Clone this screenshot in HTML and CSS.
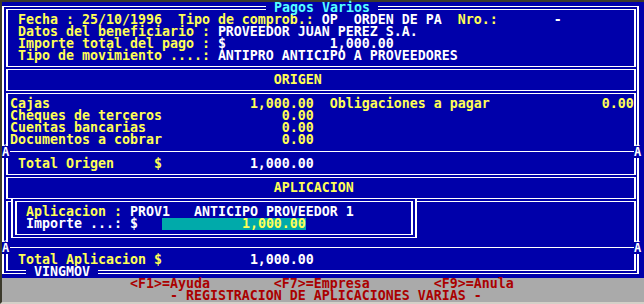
FILE: index.html
```html
<!DOCTYPE html>
<html>
<head>
    <meta charset="utf-8">
    <title>Pagos Varios</title>
    <link rel="stylesheet" href="styles.css">
</head>
<body>
    <div class="screen">
        <div class="frame frame-top">
            <div class="frame-title"> Pagos Varios </div>

            <div class="section">
                <div class="ln indent">Fecha : 25/10/1996  Tipo de comprob.: <span class="w">OP  ORDEN DE PA  </span>Nro.:<span class="w">       -</span></div>
                <div class="ln indent"><span class="lbl">Datos del beneficiario :</span><span class="w">PROVEEDOR JUAN PEREZ S.A.</span></div>
                <div class="ln indent"><span class="lbl">Importe total del pago :</span><span class="w">$</span><span class="pay w">1,000.00</span></div>
                <div class="ln indent"><span class="lbl">Tipo de movimiento ....:</span><span class="w">ANTIPRO ANTICIPO A PROVEEDORES</span></div>
            </div>

            <div class="section">
                <div class="ln heading">ORIGEN</div>
            </div>

            <div class="section open-bottom">
                <div class="ln"><span class="col30">Cajas</span><span class="num">1,000.00</span><span class="col34">Obligaciones a pagar</span>0.00</div>
                <div class="ln"><span class="col30">Cheques de terceros</span><span class="num">0.00</span></div>
                <div class="ln"><span class="col30">Cuentas bancarias</span><span class="num">0.00</span></div>
                <div class="ln"><span class="col30">Documentos a cobrar</span><span class="num">0.00</span></div>
            </div>
        </div>

        <div class="divider"><span class="joint">Â</span><span class="rule"></span><span class="joint">Â</span></div>

        <div class="frame">
            <div class="section open-top">
                <div class="ln"><span class="col30"> Total Origen     $</span><span class="num w">1,000.00</span></div>
            </div>

            <div class="section">
                <div class="ln heading">APLICACION</div>
            </div>

            <div class="section pick">
                <div class="pick-box">
                    <div class="pick-inner">
                        <div class="ln"> Aplicacion : <span class="w">PROV1   ANTICIPO PROVEEDOR 1</span></div>
                        <div class="ln w"> Importe ...: $   <span class="field">1,000.00</span></div>
                    </div>
                </div>
            </div>
        </div>

        <div class="divider"><span class="joint">Â</span><span class="rule"></span><span class="joint">Â</span></div>

        <div class="frame frame-bottom">
            <div class="frame-title bottom-title"> VINGMOV </div>
            <div class="section open-top">
                <div class="ln"><span class="col30"> Total Aplicacion $</span><span class="num w">1,000.00</span></div>
            </div>
        </div>

        <div class="status">
            <div class="ln keys"><span class="key18">&lt;F1&gt;=Ayuda</span><span class="key20">&lt;F7&gt;=Empresa</span>&lt;F9&gt;=Anula</div>
            <div class="ln caption">- REGISTRACION DE APLICACIONES VARIAS -</div>
        </div>
    </div>
</body>
</html>
```

FILE: styles.css
```css
* { box-sizing: border-box; }

body {
    margin: 0;
    background: #0000aa;
    color: #ffff55;
    font-family: "DejaVu Sans Mono", monospace;
    font-weight: bold;
    font-size: 13.29px;
}

.screen {
    width: 644px;
    height: 304px;
    background: #0000aa;
    border-top: 2px solid #3c3a2c;
    border-left: 2px solid #3c3a2c;
    border-bottom: 2px solid #d4d0c8;
}

/* one text row of the 80x25 screen */
.ln {
    height: 12px;
    line-height: 12px;
    white-space: pre;
}

.w { color: #ffffff; }

/* outer double frame: outer line */
.frame {
    position: relative;
    width: 637px;
    border-left: 2px solid #fff;
    border-right: 2px solid #fff;
    padding: 0 1px 0 2px;
}

.frame-top {
    margin-top: 4px;
    border-top: 1px solid #fff;
}

.frame-bottom {
    border-bottom: 1px solid #fff;
    padding-bottom: 2px;
    margin-bottom: 4px;
}

.frame-title {
    position: absolute;
    left: 262px;
    top: -5px;
    height: 12px;
    line-height: 12px;
    white-space: pre;
    background: #0000aa;
    color: #55ffff;
}

.bottom-title {
    left: 22px;
    top: 12px;
    color: #ffffff;
}

/* inner line of the frame, one box per block */
.section {
    margin-top: 2px;
    padding: 4px 0 4px 2px;
    border-top: 1px solid #fff;
    border-bottom: 1px solid #fff;
    border-left: 2px solid #fff;
    border-right: 2px solid #fff;
}

.section.open-top {
    margin-top: 0;
    padding-top: 0;
    border-top: none;
}

.section.open-bottom {
    padding-bottom: 0;
    border-bottom: none;
}

.indent { padding-left: 1ch; }
.heading { padding-left: 33ch; }

.lbl {
    display: inline-block;
    width: 25ch;
}

.pay {
    display: inline-block;
    width: 21ch;
    text-align: right;
}

.col30 {
    display: inline-block;
    width: 30ch;
}

.col34 {
    display: inline-block;
    width: 34ch;
    margin-left: 2ch;
}

.num {
    display: inline-block;
    width: 8ch;
    text-align: right;
}

/* "Aplicacion" entry box drawn over the separator */
.section.pick {
    padding: 0 0 4px 2px;
    border-bottom: none;
}

.pick-box {
    width: 406px;
    margin: -4px 0 0 1px;
    padding: 2px;
    background: #0000aa;
    border-top: 1px solid #fff;
    border-bottom: 1px solid #fff;
    border-left: 2px solid #fff;
    border-right: 2px solid #fff;
}

.pick-inner {
    padding: 4px 0 4px 1px;
    border-top: 1px solid #fff;
    border-bottom: 1px solid #fff;
    border-left: 2px solid #fff;
    border-right: 2px solid #fff;
}

.field {
    display: inline-block;
    width: 18ch;
    height: 12px;
    vertical-align: top;
    text-align: right;
    background: #00aaaa;
    color: #ffff55;
}

/* single separator rows, the joints show up as a stray glyph */
.divider {
    display: flex;
    width: 640px;
    height: 12px;
    color: #fff;
}

.divider .joint {
    width: 8px;
    font-size: 12px;
    line-height: 12px;
}

.divider .rule {
    flex: 1;
    height: 0;
    margin-top: 5px;
    border-top: 1px solid #fff;
}

.status {
    background: #aaaaaa;
    color: #aa0000;
}

.keys { padding-left: 16ch; }
.caption { padding-left: 21ch; }

.key18 {
    display: inline-block;
    width: 18ch;
}

.key20 {
    display: inline-block;
    width: 20ch;
}
```
